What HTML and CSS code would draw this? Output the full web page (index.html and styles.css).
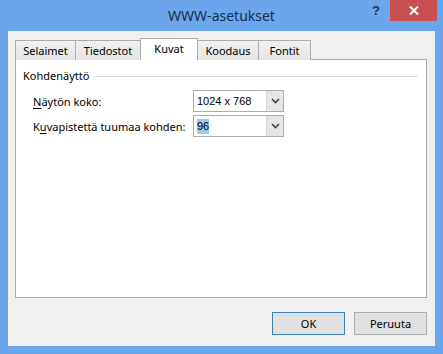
FILE: index.html
```html
<!DOCTYPE html>
<html>
<head>
<meta charset="utf-8">
<link rel="stylesheet" href="styles.css">
</head>
<body>
<div class="window">
  <div class="titlebar">
    <div class="spacer"></div>
    <div class="title">WWW-asetukset</div>
    <div class="controls">
      <span class="help">?</span>
      <span class="close"><svg width="10" height="9" viewBox="0 0 10 9"><path d="M1 0.5 L9 8.5 M9 0.5 L1 8.5" stroke="#fff" stroke-width="2"/></svg></span>
    </div>
  </div>
  <div class="client">
    <div class="tabs">
      <div class="tab w1">Selaimet</div>
      <div class="tab w2">Tiedostot</div>
      <div class="tab sel w3">Kuvat</div>
      <div class="tab w4">Koodaus</div>
      <div class="tab w5">Fontit</div>
    </div>
    <div class="page">
      <div class="group-head">
        <span>Kohdenäyttö</span>
        <span class="line"></span>
      </div>
      <div class="rows">
        <div class="row">
          <span class="label"><u>N</u>äytön koko:</span>
          <div class="combo"><span class="value">1024 x 768</span><span class="drop"><svg width="9" height="6" viewBox="0 0 9 6"><path d="M1 1 L4.5 4.5 L8 1" stroke="#444" stroke-width="1.6" fill="none"/></svg></span></div>
        </div>
        <div class="row">
          <span class="label">K<u>u</u>vapistettä tuumaa kohden:</span>
          <div class="combo"><span class="value"><span class="hl">96</span></span><span class="drop"><svg width="9" height="6" viewBox="0 0 9 6"><path d="M1 1 L4.5 4.5 L8 1" stroke="#444" stroke-width="1.6" fill="none"/></svg></span></div>
        </div>
      </div>
    </div>
    <div class="buttons">
      <button class="btn default">OK</button>
      <button class="btn">Peruuta</button>
    </div>
  </div>
</div>
</body>
</html>
```

FILE: styles.css
```css
html, body {
  margin: 0;
  padding: 0;
}
body {
  width: 443px;
  height: 354px;
  overflow: hidden;
  font-family: "Noto Sans", "Open Sans", sans-serif;
  font-size: 11px;
  color: #000;
}
.window {
  width: 443px;
  height: 354px;
  background: #6ba6ec;
  display: flex;
  flex-direction: column;
  box-sizing: border-box;
}
.titlebar {
  height: 31px;
  display: grid;
  grid-template-columns: 1fr auto 1fr;
  align-items: start;
}
.title {
  font-size: 14px;
  color: #15304d;
  line-height: 31px;
  text-align: center;
}
.controls {
  justify-self: end;
  display: flex;
  align-items: flex-start;
  margin-right: 6px;
}
.help {
  font-family: "Liberation Sans", sans-serif;
  font-weight: bold;
  font-size: 13px;
  color: #1d344f;
  width: 20px;
  line-height: 22px;
  margin-right: 4px;
  text-align: center;
}
.close {
  width: 47px;
  height: 21px;
  background: #c75050;
  display: flex;
  align-items: center;
  justify-content: center;
}
.client {
  flex: 1;
  margin: 0 8px 8px 8px;
  background: #f0f0f0;
  padding: 7px 8px 0 7px;
  display: flex;
  flex-direction: column;
}
.tabs {
  display: flex;
  align-items: flex-end;
  height: 22px;
  position: relative;
  z-index: 1;
  margin-bottom: -1px;
}
.tab {
  box-sizing: border-box;
  height: 20px;
  border: 1px solid #acacac;
  border-bottom: none;
  margin-right: -1px;
  background: linear-gradient(#f0f0f0, #e5e5e5);
  text-align: center;
  line-height: 19px;
  color: #000;
}
.tab.sel {
  height: 22px;
  background: #fff;
  line-height: 20px;
  border-bottom: 1px solid #fff;
}
.w1 { width: 61px; }
.w2 { width: 66px; }
.w3 { width: 58px; }
.w4 { width: 62px; }
.w5 { width: 53px; }
.page {
  height: 239px;
  box-sizing: border-box;
  background: #fff;
  border: 1px solid #acacac;
  padding: 8px 8px 0 7px;
}
.group-head {
  display: flex;
  align-items: center;
  gap: 5px;
  line-height: 16px;
}
.group-head .line {
  flex: 1;
  height: 1px;
  background: #dcdcdc;
  margin-top: 1px;
}
.rows {
  padding: 6px 0 0 10px;
  display: flex;
  flex-direction: column;
  gap: 3px;
}
.row {
  display: flex;
  align-items: center;
  height: 22px;
}
.label {
  width: 160px;
  flex: none;
  white-space: nowrap;
}
.label u {
  text-decoration-thickness: 1px;
  text-underline-offset: 2px;
}
.combo {
  width: 91px;
  height: 22px;
  box-sizing: border-box;
  border: 1px solid #acacac;
  display: flex;
  background: #fff;
}
.value {
  flex: 1;
  padding-left: 3px;
  line-height: 20px;
  font-family: "Liberation Sans", sans-serif;
  font-size: 11px;
}
.hl {
  background: #99c9ef;
  display: inline-block;
  line-height: 15px;
}
.drop {
  width: 16px;
  background: #e5e5e5;
  border-left: 1px solid #d5d5d5;
  display: flex;
  align-items: center;
  justify-content: center;
}
.buttons {
  display: flex;
  justify-content: flex-end;
  gap: 9px;
  margin-top: 14px;
}
.btn {
  width: 73px;
  height: 23px;
  box-sizing: border-box;
  border: 1px solid #adadad;
  background: #e1e1e1;
  font-family: "Noto Sans", "Open Sans", sans-serif;
  font-size: 11px;
  color: #000;
  padding: 0;
}
.btn.default {
  border-color: #3c7fb1;
}
```
